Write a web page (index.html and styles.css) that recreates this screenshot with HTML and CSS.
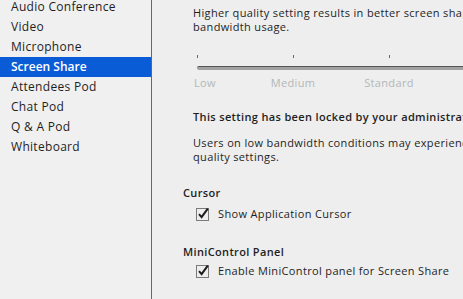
FILE: index.html
```html
<!DOCTYPE html>
<html lang="en">
<head>
  <meta charset="UTF-8" />
  <title>Preferences - Screen Share</title>
  <link rel="stylesheet" href="styles.css">
</head>
<body>
  <div class="prefs">
    <ul class="nav">
      <li>Audio Conference</li>
      <li>Video</li>
      <li>Microphone</li>
      <li class="active">Screen Share</li>
      <li>Attendees Pod</li>
      <li>Chat Pod</li>
      <li>Q &amp; A Pod</li>
      <li>Whiteboard</li>
    </ul>

    <div class="panel">
      <p class="note">Higher quality setting results in better screen share quality but increases<br>bandwidth usage.</p>

      <div class="quality">
        <div class="ticks"><span></span><span></span><span></span><span></span></div>
        <div class="track"></div>
        <div class="labels">
          <span class="first">Low</span>
          <span>Medium</span>
          <span>Standard</span>
          <span>High</span>
        </div>
      </div>

      <p class="locked">This setting has been locked by your administrator.</p>
      <p class="note users">Users on low bandwidth conditions may experience latency with higher<br>quality settings.</p>

      <h3 class="group cursor-group">Cursor</h3>
      <label class="check">
        <svg width="14" height="14" viewBox="0 0 14 14">
          <rect x="0.5" y="1.5" width="12" height="12" fill="none" stroke="#7a7a7a" />
          <path d="M3 7.2 L5.6 10.2 L11.8 1.6" fill="none" stroke="#1c1c1c" stroke-width="2" />
        </svg>
        Show Application Cursor
      </label>

      <h3 class="group">MiniControl Panel</h3>
      <label class="check check-last">
        <svg width="14" height="14" viewBox="0 0 14 14">
          <rect x="0.5" y="1.5" width="12" height="12" fill="none" stroke="#7a7a7a" />
          <path d="M3 7.2 L5.6 10.2 L11.8 1.6" fill="none" stroke="#1c1c1c" stroke-width="2" />
        </svg>
        Enable MiniControl panel for Screen Share
      </label>
    </div>
  </div>
</body>
</html>
```

FILE: styles.css
```css
body {
  margin: 0;
  font-family: "Open Sans", "DejaVu Sans", sans-serif;
  font-size: 11px;
  letter-spacing: 0.35px;
  color: #1e1e1e;
  background: #eeeeee;
  overflow: hidden;
}

.prefs {
  display: flex;
  height: 299px;
  width: 760px;
}

.nav {
  list-style: none;
  margin: 0;
  padding: 0;
  width: 151px;
  flex-shrink: 0;
  background: #f0f0f0;
  border-right: 1px solid #666666;
  font-size: 12px;
  letter-spacing: 0.3px;
}

.nav li {
  height: 20px;
  line-height: 20px;
  padding-left: 11px;
  white-space: nowrap;
}

.nav li:first-child {
  margin-top: -3px;
}

.nav li.active {
  background: #0a5cd6;
  color: white;
  font-weight: 600;
  letter-spacing: 0;
}

.panel {
  flex: 1;
  padding: 6px 0 0 31px;
  line-height: 14px;
}

.panel p {
  margin: 0;
  padding-left: 10px;
  white-space: nowrap;
}

.quality {
  padding-left: 10px;
  margin-top: 21px;
}

.ticks,
.labels {
  display: grid;
  grid-template-columns: repeat(4, 96px);
  margin-left: -44px;
}

.ticks span {
  justify-self: center;
  width: 1px;
  height: 3px;
  background: #6a6a6a;
}

.track {
  margin: 8px 0 0 4px;
  height: 3px;
  background: #a2a2a2;
  border-top: 1px solid #555555;
  border-radius: 2px 0 0 2px;
}

.labels {
  margin-top: 6px;
  color: #b3b7b7;
}

.labels span {
  text-align: center;
}

.labels span.first {
  text-align: left;
  padding-left: 45px;
}

.locked {
  margin-top: 20px !important;
  font-weight: 600;
}

.users {
  margin-top: 12px !important;
}

.group {
  margin: 24px 0 0;
  font-size: 11px;
  font-weight: 600;
  line-height: 14px;
}

.cursor-group {
  margin-top: 22px;
}

.check {
  display: flex;
  align-items: center;
  gap: 8px;
  margin: 7px 0 0 13px;
  height: 14px;
  white-space: nowrap;
}

.check-last {
  margin-top: 5px;
}
```
